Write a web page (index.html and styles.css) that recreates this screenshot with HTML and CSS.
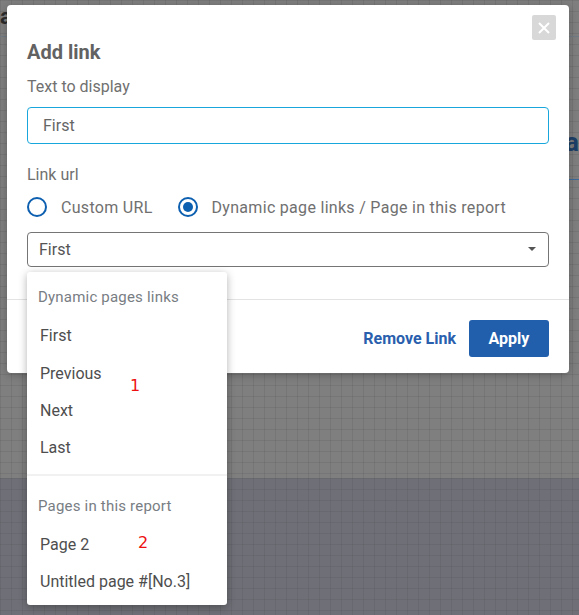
FILE: index.html
```html
<!DOCTYPE html>
<html lang="en">
<head>
<meta charset="utf-8">
<title>Add link</title>
<link rel="stylesheet" href="styles.css">
</head>
<body>
<div class="page">
  <div class="page-top">
    <div class="page-head">
      <span class="page-head-text">a</span>
    </div>
    <div class="page-side">a</div>
  </div>
  <div class="page-bottom"></div>
</div>

<div class="modal">
  <button class="close" type="button" aria-label="Close">
    <svg width="12" height="12" viewBox="0 0 12 12"><path d="M1 1L11 11M11 1L1 11" stroke="#fff" stroke-width="2" fill="none"/></svg>
  </button>
  <h2 class="modal-title">Add link</h2>
  <div class="modal-body">
    <div class="label">Text to display</div>
    <div class="input">First</div>
    <div class="label label-url">Link url</div>
    <div class="radios">
      <div class="radio-opt">
        <span class="radio"></span>
        <span class="radio-label">Custom URL</span>
      </div>
      <div class="radio-opt">
        <span class="radio radio-on"></span>
        <span class="radio-label">Dynamic page links / Page in this report</span>
      </div>
    </div>
    <div class="select">
      <span>First</span>
      <span class="caret"></span>
    </div>
  </div>
  <div class="divider"></div>
  <div class="footer">
    <span class="btn-link">Remove Link</span>
    <span class="btn-primary">Apply</span>
  </div>
</div>

<div class="menu">
  <div class="menu-group">
    <div class="menu-head">Dynamic pages links</div>
    <div class="menu-item">First</div>
    <div class="menu-item">Previous</div>
    <div class="menu-item">Next</div>
    <div class="menu-item">Last</div>
  </div>
  <div class="menu-sep"></div>
  <div class="menu-group">
    <div class="menu-head">Pages in this report</div>
    <div class="menu-item">Page 2</div>
    <div class="menu-item">Untitled page #[No.3]</div>
  </div>
</div>

<span class="anno anno-1">1</span>
<span class="anno anno-2">2</span>
</body>
</html>
```

FILE: styles.css
```css
html, body {
  margin: 0;
  padding: 0;
}
body {
  width: 579px;
  height: 615px;
  overflow: hidden;
  position: relative;
  font-family: Roboto, "Liberation Sans", sans-serif;
}
.page {
  display: flex;
  flex-direction: column;
  height: 615px;
}
.page-top {
  height: 478px;
  background-color: #7f7f7f;
  background-image:
    repeating-linear-gradient(to right, rgba(0,0,0,0.07) 0 1px, transparent 1px 11px),
    repeating-linear-gradient(to bottom, rgba(0,0,0,0.07) 0 1px, transparent 1px 11px);
  display: flex;
  flex-direction: column;
}
.page-head {
  height: 36px;
  border-bottom: 1px solid #707a84;
  display: flex;
  align-items: flex-start;
}
.page-head-text {
  font-size: 22px;
  line-height: 22px;
  font-weight: 700;
  color: #2b2b2b;
  margin-left: 0;
  margin-top: 6px;
}
.page-side {
  align-self: flex-end;
  margin-top: 90px;
  font-size: 26px;
  line-height: 30px;
  font-weight: 700;
  color: #1d3f66;
  width: 14px;
  overflow: hidden;
  text-align: right;
  border-bottom: 1px solid #3d6a9a;
  padding-bottom: 22px;
}
.page-bottom {
  flex: 1;
  background-color: #6f7077;
  background-image:
    repeating-linear-gradient(to right, rgba(0,0,0,0.06) 0 1px, transparent 1px 11px),
    repeating-linear-gradient(to bottom, rgba(0,0,0,0.06) 0 1px, transparent 1px 11px);
}

/* Modal */
.modal {
  position: absolute;
  left: 7px;
  top: 5px;
  width: 562px;
  background: #fff;
  border-radius: 4px;
  box-shadow: 0 2px 10px rgba(0,0,0,0.25);
}
.close {
  position: absolute;
  top: 10px;
  right: 13px;
  width: 24px;
  height: 25px;
  border: 0;
  padding: 0;
  border-radius: 2px;
  background: #d8d8d8;
  display: flex;
  align-items: center;
  justify-content: center;
}
.modal-title {
  margin: 0;
  padding: 35px 20px 0;
  font-size: 20px;
  line-height: 24px;
  font-weight: 700;
  color: #626262;
}
.modal-body {
  padding: 0 20px;
  display: flex;
  flex-direction: column;
}
.label {
  margin-top: 13px;
  font-size: 16px;
  line-height: 20px;
  color: #707070;
}
.label-url {
  margin-top: 21px;
}
.input {
  margin-top: 10px;
  height: 37px;
  box-sizing: border-box;
  border: 1px solid #18a7dc;
  border-radius: 4px;
  padding-left: 15px;
  display: flex;
  align-items: center;
  font-size: 16px;
  color: #666;
}
.radios {
  margin-top: 11px;
  height: 22px;
  display: flex;
  align-items: center;
  gap: 25px;
}
.radio-opt {
  display: flex;
  align-items: center;
  gap: 14px;
}
.radio {
  width: 20px;
  height: 20px;
  box-sizing: border-box;
  border: 2px solid #0d5fb0;
  border-radius: 50%;
  display: flex;
  align-items: center;
  justify-content: center;
}
.radio-on::after {
  content: "";
  width: 10px;
  height: 10px;
  border-radius: 50%;
  background: #0d5fb0;
}
.radio-label {
  font-size: 16px;
  letter-spacing: 0.3px;
  color: #707070;
}
.select {
  margin-top: 13.5px;
  height: 35.5px;
  box-sizing: border-box;
  border: 1px solid #757575;
  border-radius: 4px;
  padding: 0 12px 0 11px;
  display: flex;
  align-items: center;
  justify-content: space-between;
  font-size: 16px;
  color: #555;
}
.caret {
  width: 0;
  height: 0;
  border-left: 4px solid transparent;
  border-right: 4px solid transparent;
  border-top: 4px solid #555;
}
.divider {
  margin-top: 32px;
  height: 1px;
  background: #e3e3e3;
}
.footer {
  padding: 20px 20px 15.5px;
  display: flex;
  justify-content: flex-end;
  align-items: center;
  gap: 13px;
}
.btn-link {
  font-size: 16px;
  font-weight: 700;
  color: #2a5fae;
}
.btn-primary {
  width: 80px;
  height: 37px;
  border-radius: 3px;
  background: #215eac;
  color: #fff;
  font-size: 16px;
  font-weight: 700;
  display: flex;
  align-items: center;
  justify-content: center;
}

/* Dropdown menu */
.menu {
  position: absolute;
  left: 27px;
  top: 272px;
  width: 200px;
  background: #fff;
  border-radius: 3px;
  box-shadow: 0 2px 8px rgba(0,0,0,0.3);
  padding-bottom: 5.3px;
}
.menu-head {
  padding: 15px 10px 9.33px 11px;
  font-size: 15px;
  line-height: 20px;
  letter-spacing: 0.2px;
  color: #787d83;
}
.menu-item {
  height: 37.33px;
  line-height: 39px;
  padding-left: 13px;
  font-size: 16px;
  color: #4e4e4e;
}
.menu-sep {
  margin: 8px 0 5px;
  height: 2px;
  background: #f1f1f1;
}

.anno {
  position: absolute;
  font-family: "DejaVu Sans", sans-serif;
  font-size: 16px;
  color: #ee1111;
  line-height: 20px;
}
.anno-1 {
  left: 130px;
  top: 376px;
}
.anno-2 {
  left: 138px;
  top: 533px;
}
```
